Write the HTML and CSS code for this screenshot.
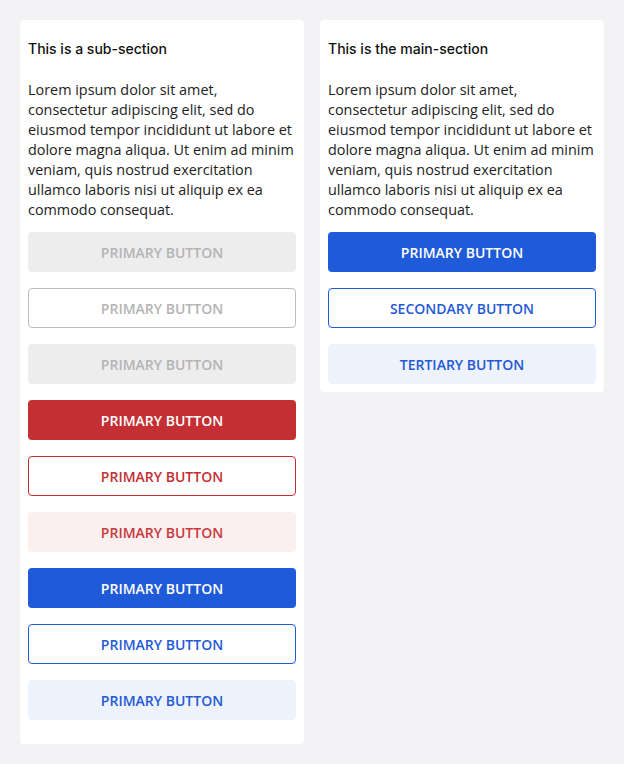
FILE: index.html
```html
<!DOCTYPE html>
<html>
<head>
<meta charset="utf-8">
<link rel="stylesheet" href="styles.css">
</head>
<body>
<div class="page">
  <section class="card card-sub">
    <h2 class="title">This is a sub-section</h2>
    <p class="text">Lorem ipsum dolor sit amet, consectetur adipiscing elit, sed do eiusmod tempor incididunt ut labore et dolore magna aliqua. Ut enim ad minim veniam, quis nostrud exercitation ullamco laboris nisi ut aliquip ex ea commodo consequat.</p>
    <div class="buttons">
      <button class="btn btn-disabled">Primary button</button>
      <button class="btn btn-disabled-outline">Primary button</button>
      <button class="btn btn-disabled">Primary button</button>
      <button class="btn btn-red">Primary button</button>
      <button class="btn btn-red-outline">Primary button</button>
      <button class="btn btn-red-light">Primary button</button>
      <button class="btn btn-blue">Primary button</button>
      <button class="btn btn-blue-outline">Primary button</button>
      <button class="btn btn-blue-light">Primary button</button>
    </div>
  </section>
  <section class="card card-main">
    <h2 class="title">This is the main-section</h2>
    <p class="text">Lorem ipsum dolor sit amet, consectetur adipiscing elit, sed do eiusmod tempor incididunt ut labore et dolore magna aliqua. Ut enim ad minim veniam, quis nostrud exercitation ullamco laboris nisi ut aliquip ex ea commodo consequat.</p>
    <div class="buttons">
      <button class="btn btn-blue">Primary button</button>
      <button class="btn btn-blue-outline">Secondary button</button>
      <button class="btn btn-blue-light">Tertiary button</button>
    </div>
  </section>
</div>
</body>
</html>
```
FILE: styles.css
```css
* { box-sizing: border-box; }
html, body { margin: 0; padding: 0; }
body {
  background: #f3f3f6;
  font-family: "Open Sans", "Liberation Sans", sans-serif;
  color: #1a1a1a;
  width: 624px;
  min-height: 764px;
}
.page {
  display: flex;
  align-items: flex-start;
  gap: 16px;
  padding: 20px;
}
.card {
  background: #ffffff;
  border-radius: 4px;
  width: 284px;
  padding: 8px 8px 8px;
  display: flex;
  flex-direction: column;
}
.card-sub { padding-bottom: 24px; }
.title {
  margin: 0;
  font-family: "Inter", "Lato", sans-serif;
  font-weight: 500;
  font-size: 14px;
  line-height: 16px;
  padding: 13px 0 11px;
  color: #111;
}
.text {
  margin: 12px 0 12px;
  font-size: 14.4px;
  line-height: 20px;
  color: #222;
}
.buttons {
  display: flex;
  flex-direction: column;
  gap: 16px;
}
.btn {
  height: 40px;
  width: 100%;
  border-radius: 4px;
  border: 1px solid transparent;
  font-family: "Open Sans", "Liberation Sans", sans-serif;
  font-weight: 600;
  font-size: 14px;
  text-transform: uppercase;
  letter-spacing: 0;
  cursor: pointer;
  padding: 0;
}
.btn-disabled { background: #ededed; color: #b4b4b4; }
.btn-disabled-outline { background: #fff; color: #b4b4b4; border-color: #bdbdbd; }
.btn-red { background: #c42f33; color: #fff; }
.btn-red-outline { background: #fff; color: #c42f33; border-color: #c42f33; }
.btn-red-light { background: #fcefef; color: #c73a3d; }
.btn-blue { background: #1f5ad9; color: #fff; }
.btn-blue-outline { background: #fff; color: #1f5ad9; border-color: #1f5ad9; }
.btn-blue-light { background: #edf2fc; color: #2459d3; }
```
